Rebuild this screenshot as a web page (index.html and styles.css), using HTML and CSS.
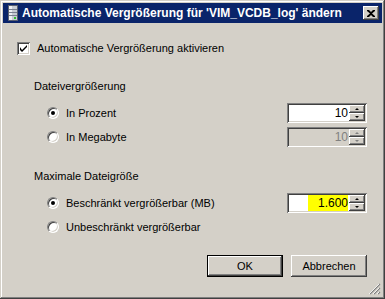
FILE: index.html
```html
<!DOCTYPE html>
<html lang="de">
<head>
    <meta charset="UTF-8">
    <title>Automatische Vergrößerung</title>
    <link rel="stylesheet" href="styles.css">
</head>
<body>

<div class="window">
    <div class="titlebar">
        <svg class="app-icon" width="10" height="16" viewBox="0 0 10 16">
            <rect x="0.5" y="0.5" width="9" height="15" fill="#c8ccd4" stroke="#5a6070"/>
            <rect x="1" y="1" width="3" height="14" fill="#eef0f4"/>
            <line x1="1" y1="4.5" x2="9" y2="4.5" stroke="#7a8090"/>
            <line x1="1" y1="7.5" x2="9" y2="7.5" stroke="#7a8090"/>
            <line x1="1" y1="10.5" x2="9" y2="10.5" stroke="#7a8090"/>
            <rect x="6" y="12" width="2" height="2" fill="#30c030"/>
        </svg>
        <span class="title">Automatische Vergrößerung für 'VIM_VCDB_log' ändern</span>
        <div class="close-btn">
            <svg width="8" height="7" viewBox="0 0 8 7">
                <path d="M0 0h2l2 2 2-2h2v1l-3 2.5 3 2.5v1h-2l-2-2-2 2h-2v-1l3-2.5-3-2.5z" fill="#000"/>
            </svg>
        </div>
    </div>

    <div class="content">
        <div class="check-row">
            <span class="checkbox">
                <svg width="7" height="7" viewBox="0 0 7 7">
                    <path d="M0 2v3l2 2 5-5v-2l-5 5z" fill="#000"/>
                </svg>
            </span>
            Automatische Vergrößerung aktivieren
        </div>

        <div class="group-label first">Dateivergrößerung</div>

        <div class="option-row">
            <div class="radio-label"><span class="radio checked"></span>In Prozent</div>
            <div class="spin">
                <div class="spin-field">10</div>
                <div class="spin-buttons">
                    <span class="spin-btn"><i class="arrow-up"></i></span>
                    <span class="spin-btn"><i class="arrow-down"></i></span>
                </div>
            </div>
        </div>

        <div class="option-row tight">
            <div class="radio-label"><span class="radio"></span>In Megabyte</div>
            <div class="spin disabled">
                <div class="spin-field">10</div>
                <div class="spin-buttons">
                    <span class="spin-btn"><i class="arrow-up"></i></span>
                    <span class="spin-btn"><i class="arrow-down"></i></span>
                </div>
            </div>
        </div>

        <div class="group-label second">Maximale Dateigröße</div>

        <div class="option-row">
            <div class="radio-label"><span class="radio checked"></span>Beschränkt vergrößerbar (MB)</div>
            <div class="spin">
                <div class="spin-field"><span class="highlight">1.600</span></div>
                <div class="spin-buttons">
                    <span class="spin-btn"><i class="arrow-up"></i></span>
                    <span class="spin-btn"><i class="arrow-down"></i></span>
                </div>
            </div>
        </div>

        <div class="option-row tight">
            <div class="radio-label"><span class="radio"></span>Unbeschränkt vergrößerbar</div>
        </div>

        <div class="button-row">
            <div class="btn default">OK</div>
            <div class="btn">Abbrechen</div>
        </div>
    </div>

    <svg class="grip" width="12" height="12" viewBox="0 0 12 12">
        <path d="M11 1L1 11M11 5L5 11M11 9L9 11" stroke="#808080" stroke-width="1.2"/>
        <path d="M10 1L0 11M10 5L4 11M10 9L8 11" stroke="#ffffff" stroke-width="0.8"/>
    </svg>
</div>

</body>
</html>
```

FILE: styles.css
```css
body {
    margin: 0;
    background-color: #d4d0c8;
    font-family: "Liberation Sans", Arial, sans-serif;
    font-size: 11px;
    color: #000;
}

.window {
    width: 385px;
    height: 299px;
    box-sizing: border-box;
    padding: 3px;
    position: relative;
    background-color: #d4d0c8;
    box-shadow: inset -1px -1px #404040, inset 1px 1px #d4d0c8,
                inset -2px -2px #808080, inset 2px 2px #ffffff;
}

/* title bar */
.titlebar {
    height: 20px;
    display: flex;
    align-items: center;
    padding: 0 3px 0 5px;
    background-color: #0a246a;
    color: #fff;
}

.app-icon {
    flex: none;
    margin-right: 4px;
}

.title {
    flex: 1;
    font-size: 12px;
    font-weight: bold;
    white-space: nowrap;
}

.close-btn {
    width: 16px;
    height: 14px;
    display: flex;
    align-items: center;
    justify-content: center;
    background-color: #d4d0c8;
    box-shadow: inset -1px -1px #404040, inset 1px 1px #ffffff,
                inset -2px -2px #808080;
}

/* dialog body */
.content {
    padding: 15px 15px 0 14px;
}

.check-row {
    height: 20px;
    display: flex;
    align-items: center;
}

.checkbox {
    width: 13px;
    height: 13px;
    box-sizing: border-box;
    margin-right: 7px;
    display: flex;
    align-items: center;
    justify-content: center;
    background-color: #fff;
    box-shadow: inset 1px 1px #808080, inset -1px -1px #ffffff,
                inset 2px 2px #404040, inset -2px -2px #d4d0c8;
}

.group-label {
    height: 16px;
    line-height: 16px;
    padding-left: 17px;
}

.group-label.first {
    margin-top: 20px;
}

.group-label.second {
    margin-top: 21px;
}

.option-row {
    height: 20px;
    margin-top: 9px;
    display: flex;
    align-items: center;
    justify-content: space-between;
}

.option-row.tight {
    margin-top: 4px;
}

.radio-label {
    display: flex;
    align-items: center;
    padding-left: 30px;
}

.radio {
    width: 12px;
    height: 12px;
    box-sizing: border-box;
    margin-right: 7px;
    position: relative;
    border-radius: 50%;
    border: 1px solid;
    border-color: #808080 #ffffff #ffffff #808080;
    background-color: #fff;
    box-shadow: inset 1px 1px #404040, inset -1px -1px #d4d0c8;
}

.radio.checked::after {
    content: "";
    position: absolute;
    left: 3px;
    top: 3px;
    width: 4px;
    height: 4px;
    border-radius: 50%;
    background-color: #000;
}

/* spin boxes */
.spin {
    width: 80px;
    height: 20px;
    box-sizing: border-box;
    padding: 2px;
    display: flex;
    background-color: #fff;
    box-shadow: inset 1px 1px #808080, inset -1px -1px #ffffff,
                inset 2px 2px #404040, inset -2px -2px #d4d0c8;
}

.spin-field {
    flex: 1;
    display: flex;
    justify-content: flex-end;
    align-items: center;
    padding-right: 1px;
    font-size: 12px;
}

.highlight {
    width: 40px;
    height: 100%;
    display: flex;
    align-items: center;
    justify-content: flex-end;
    background-color: #ffff00;
}

.spin-buttons {
    width: 16px;
    display: flex;
    flex-direction: column;
}

.spin-btn {
    flex: 1;
    display: flex;
    align-items: center;
    justify-content: center;
    background-color: #d4d0c8;
    box-shadow: inset -1px -1px #404040, inset 1px 1px #ffffff,
                inset -2px -2px #808080;
}

.arrow-up,
.arrow-down {
    width: 0;
    height: 0;
    border-left: 2px solid transparent;
    border-right: 2px solid transparent;
}

.arrow-up {
    border-bottom: 2px solid #000;
}

.arrow-down {
    border-top: 2px solid #000;
}

.spin.disabled {
    background-color: #d4d0c8;
    color: #808080;
}

.spin.disabled .arrow-up {
    border-bottom-color: #808080;
}

.spin.disabled .arrow-down {
    border-top-color: #808080;
}

/* buttons */
.button-row {
    margin-top: 18px;
    display: flex;
    justify-content: flex-end;
    gap: 8px;
}

.btn {
    width: 76px;
    height: 22px;
    box-sizing: border-box;
    display: flex;
    align-items: center;
    justify-content: center;
    background-color: #d4d0c8;
    box-shadow: inset -1px -1px #404040, inset 1px 1px #ffffff,
                inset -2px -2px #808080, inset 2px 2px #d4d0c8;
}

.btn.default {
    border: 1px solid #000;
    box-shadow: inset -1px -1px #404040, inset 1px 1px #ffffff,
                inset -2px -2px #808080;
}

.grip {
    position: absolute;
    right: 4px;
    bottom: 4px;
}
```
